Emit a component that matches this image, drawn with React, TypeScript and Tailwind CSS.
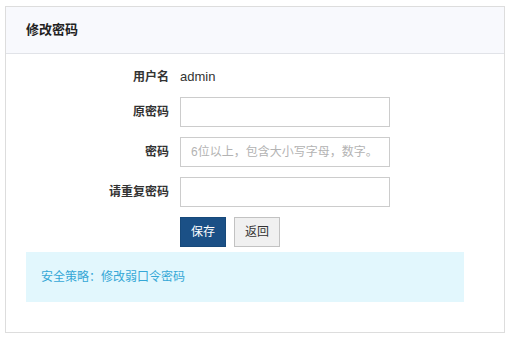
const font = { fontFamily: '"Liberation Sans", "Noto Sans CJK SC", sans-serif' };

const Row = ({ label, children }: { label: string; children: React.ReactNode }) => (
  <div className="flex items-center">
    <label className="w-[174px] pr-[11px] text-right text-[12px] font-bold text-[#333]">{label}</label>
    {children}
  </div>
);

const Input = ({ placeholder, type = "password" }: { placeholder?: string; type?: string }) => (
  <input
    type={type}
    placeholder={placeholder}
    className="h-[30px] w-[210px] border border-[#cccccc] bg-white px-[10px] text-[12px] outline-none placeholder:text-[#b3b3b3]"
  />
);

export default function App() {
  return (
    <div className="h-[338px] w-[512px] bg-white pl-[5px] pt-[6px]" style={font}>
      <div className="h-[327px] w-[500px] border border-[#dddddd]">
        <div className="flex h-[47px] items-center border-b border-[#e1e3e8] bg-[#f8f9fd] pl-[20px]">
          <h1 className="text-[13px] font-bold text-[#222]">修改密码</h1>
        </div>
        <div className="flex flex-col pt-[13px]">
          <div className="flex flex-col gap-[10px]">
            <Row label="用户名">
              <span className="h-5 text-[13px] leading-5 text-[#333]">admin</span>
            </Row>
            <Row label="原密码">
              <Input />
            </Row>
            <Row label="密码">
              <Input placeholder="6位以上，包含大小写字母，数字。" />
            </Row>
            <Row label="请重复密码">
              <Input />
            </Row>
            <div className="flex gap-[8px] pl-[174px]">
              <button className="h-[30px] w-[46px] border border-[#17497a] bg-[#1b5086] text-[12px] text-white">保存</button>
              <button className="h-[30px] w-[46px] border border-[#c2c2c2] bg-[#f0f0f0] text-[12px] text-[#333]">返回</button>
            </div>
          </div>
          <div className="ml-[20px] mt-[5px] flex h-[50px] w-[438px] items-center bg-[#e2f7fd] pl-[15px] text-[12px] text-[#35a7d6]">
            安全策略：修改弱口令密码
          </div>
        </div>
      </div>
    </div>
  );
}
